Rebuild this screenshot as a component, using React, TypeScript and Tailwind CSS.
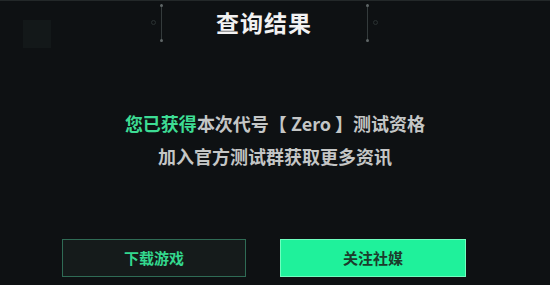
import React from 'react';

const Bracket = ({ side }: { side: 'left' | 'right' }) => (
  <div className={`absolute top-[4px] h-[38px] ${side === 'left' ? 'left-[150px]' : 'left-[365px]'} w-[14px]`}>
    <div className={`absolute top-0 bottom-0 w-px bg-[#343b3c] ${side === 'left' ? 'right-[2px]' : 'left-[2px]'}`} />
    <div className={`absolute top-0 h-[3px] w-[3px] rounded-full bg-[#5f6667] ${side === 'left' ? 'right-[1px]' : 'left-[1px]'}`} />
    <div className={`absolute bottom-0 h-[3px] w-[3px] rounded-full bg-[#5f6667] ${side === 'left' ? 'right-[1px]' : 'left-[1px]'}`} />
    <div className={`absolute top-[16px] h-[5px] w-[5px] rounded-full border border-[#2a3132] ${side === 'left' ? 'left-[1px]' : 'right-[1px]'}`} />
  </div>
);

export default function App() {
  return (
    <div
      className="relative flex h-[285px] w-[550px] flex-col overflow-hidden bg-[#0e1113]"
      style={{ fontFamily: '"Noto Sans CJK SC", "Noto Sans", sans-serif' }}
    >
      <div className="absolute left-0 right-0 top-0 h-px bg-[#232829]" />
      <div className="absolute left-[23px] top-[20px] h-[28px] w-[28px] bg-[#131819]" />
      <Bracket side="left" />
      <Bracket side="right" />

      <div className="flex h-[45px] items-center justify-center pr-[22px]">
        <h1 className="text-[23px] font-bold leading-[23px] tracking-[1px] text-[#f2f2f2]">查询结果</h1>
      </div>

      <div className="mt-[62px] flex flex-col items-center text-[18px] font-bold leading-[33px] text-[#c4c6c6]">
        <p>
          <span className="text-[#3ddc94]">您已获得</span>本次代号【 Zero 】测试资格
        </p>
        <p>加入官方测试群获取更多资讯</p>
      </div>

      <div className="mt-auto mb-[8px] flex justify-center gap-[34px] pr-[22px]">
        <button className="flex h-[38px] w-[184px] items-center justify-center border border-[#2f6b55] bg-[#151b1b] text-[15px] font-bold text-[#33d88e]">
          下载游戏
        </button>
        <button className="flex h-[38px] w-[186px] items-center justify-center border border-[#6effbf] bg-[#1ff19b] text-[15px] font-bold text-[#1c3b2c]">
          关注社媒
        </button>
      </div>
    </div>
  );
}
